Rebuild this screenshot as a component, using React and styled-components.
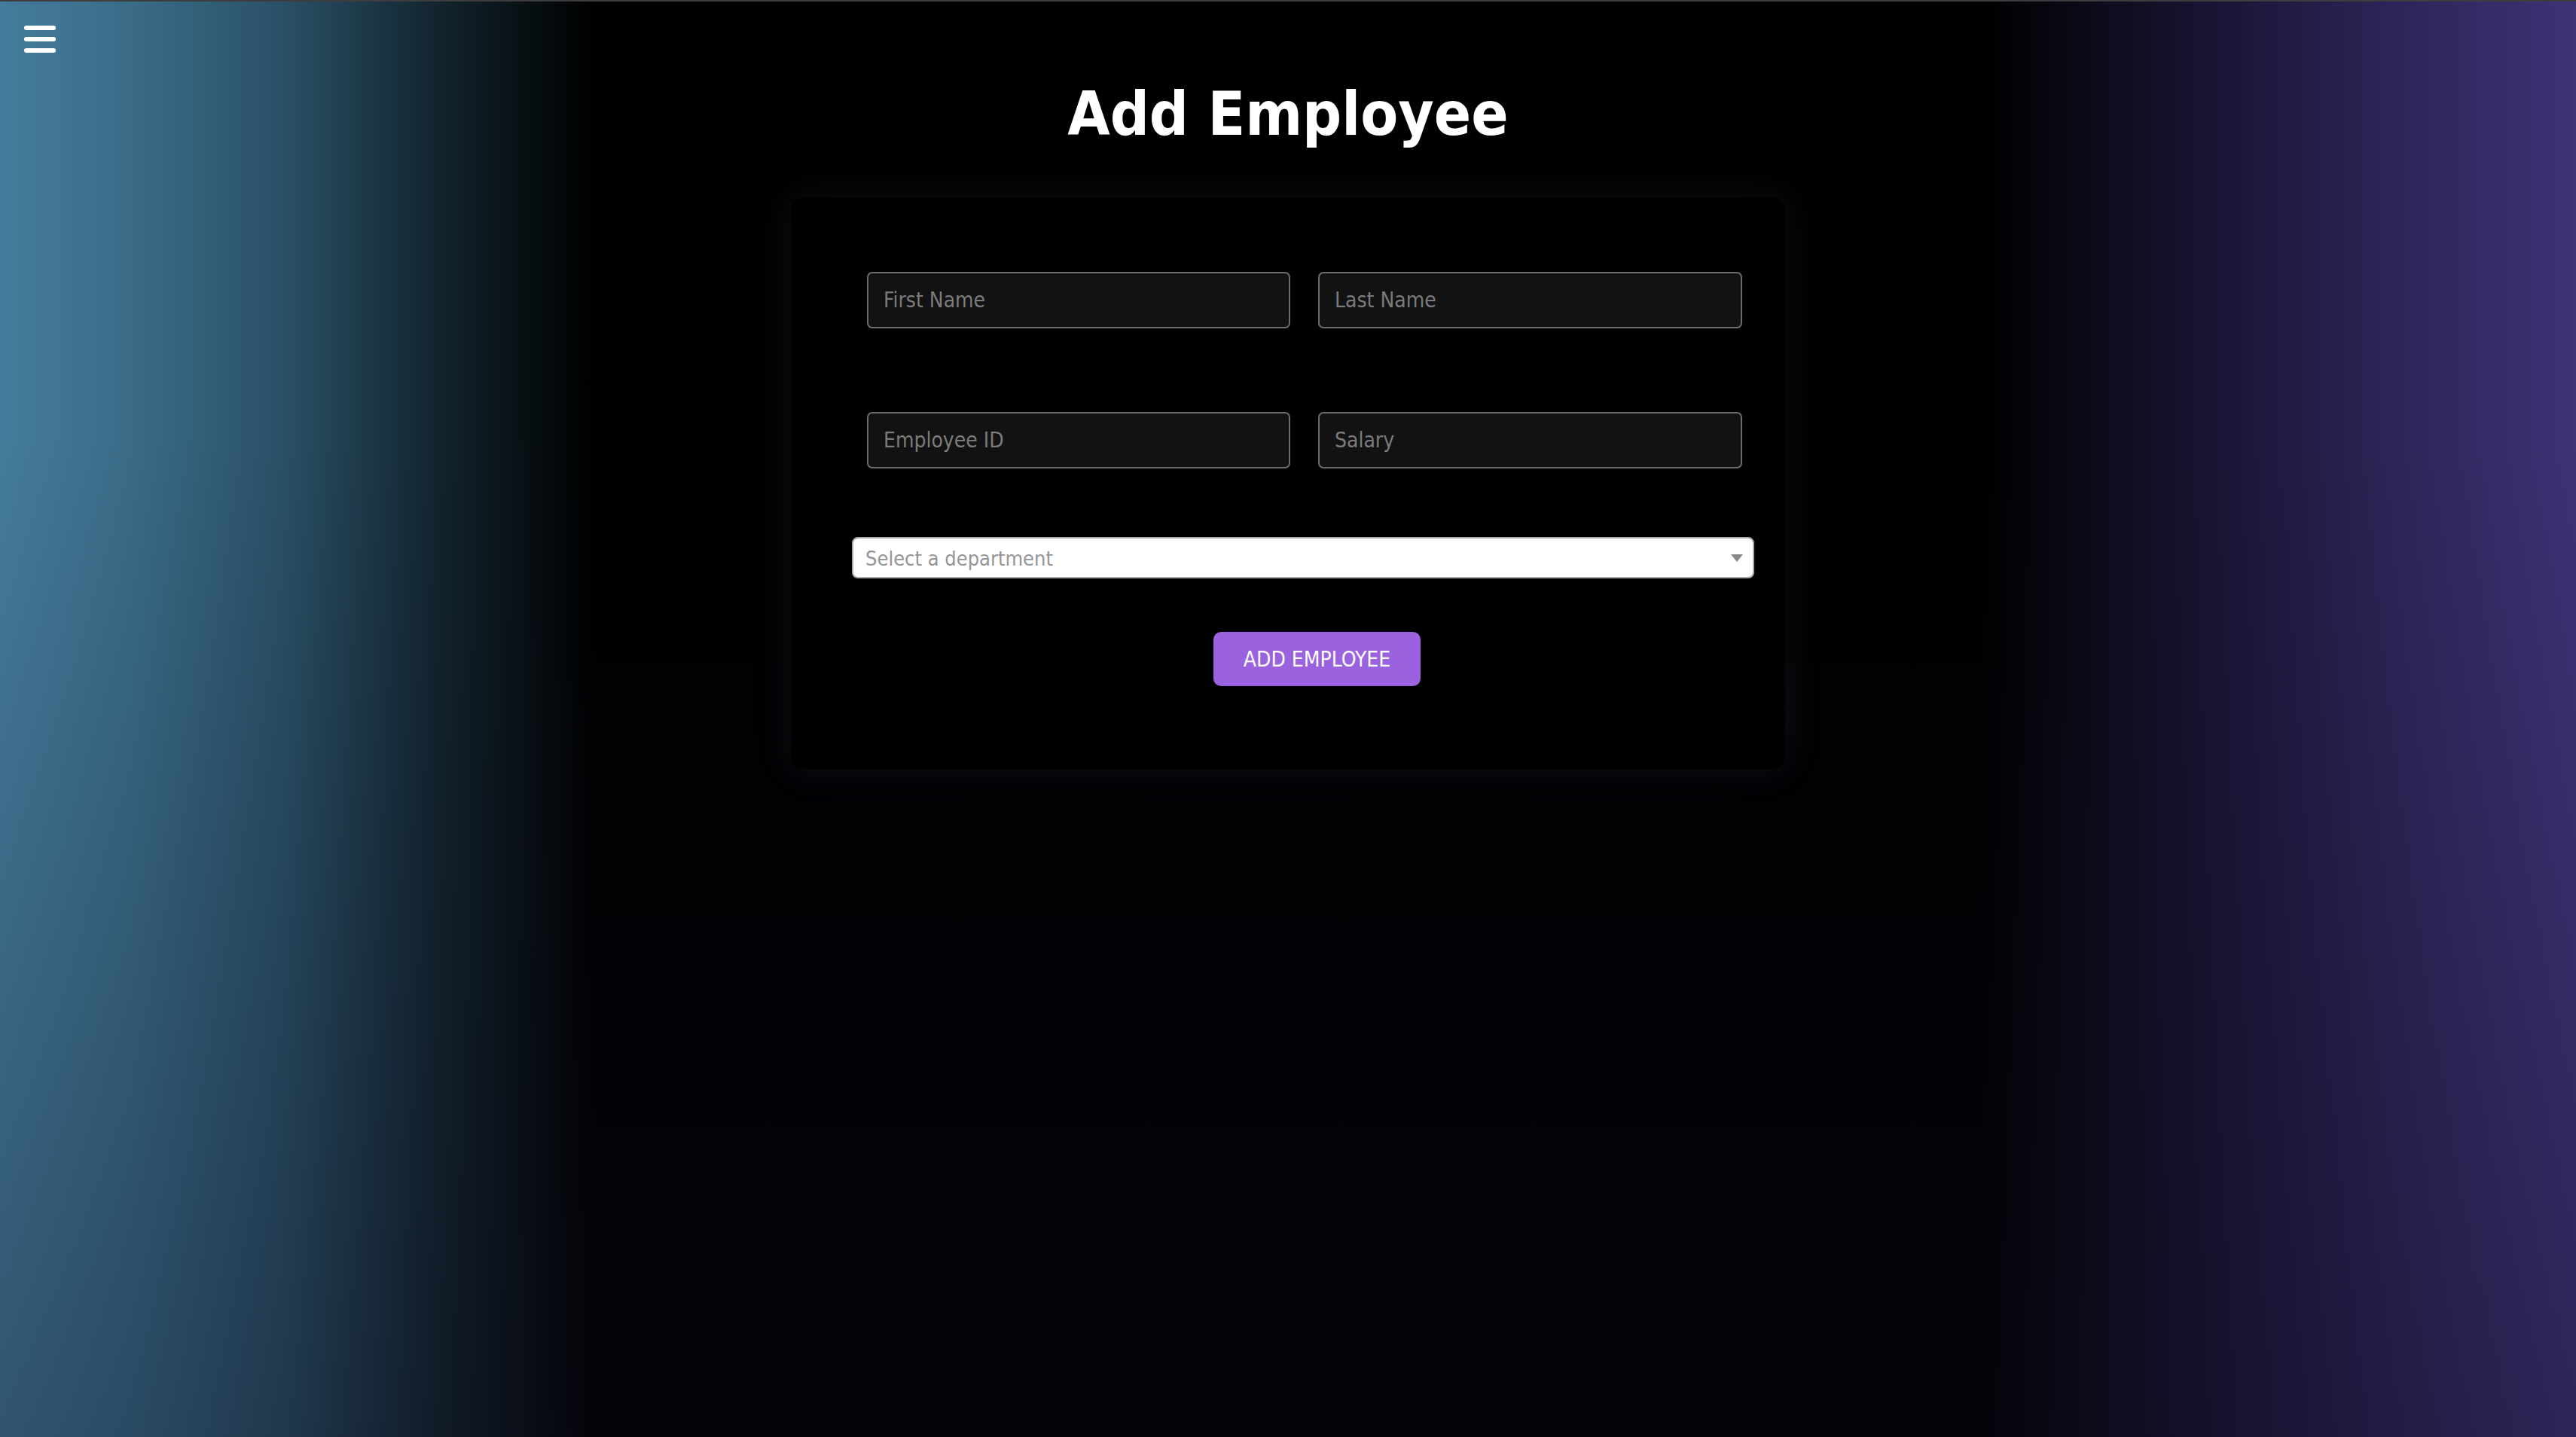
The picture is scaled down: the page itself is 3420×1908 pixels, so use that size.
import React from "react";
import styled, { createGlobalStyle } from "styled-components";

const GlobalStyle = createGlobalStyle`
  html, body {
    margin: 0;
    padding: 0;
    background: #000;
  }
  * { box-sizing: border-box; }
`;

const Page = styled.div`
  position: relative;
  min-height: 100vh;
  border-top: 2px solid #3d3d3f;
  display: flex;
  flex-direction: column;
  align-items: center;
  font-family: "DejaVu Sans Condensed", "DejaVu Sans", sans-serif;
  background:
    linear-gradient(180deg, rgba(0, 0, 0, 0) 30%, rgba(14, 11, 30, 0.35) 100%),
    linear-gradient(
      90deg,
      #447c9b 0%,
      #3a6c88 5%,
      #2a5066 11%,
      #12242e 17%,
      #000000 23%,
      #000000 77%,
      #0c0a18 81%,
      #1c173a 87%,
      #2d2558 93%,
      #3f3276 100%
    );
`;

const MenuButton = styled.button`
  position: absolute;
  top: 32px;
  left: 32px;
  width: 42px;
  padding: 0;
  border: none;
  background: transparent;
  display: flex;
  flex-direction: column;
  gap: 9px;
  cursor: pointer;
`;

const MenuBar = styled.span`
  display: block;
  width: 42px;
  height: 6px;
  border-radius: 3px;
  background: #ffffff;
`;

const Title = styled.h1`
  margin: 108px 0 70px;
  font-size: 81px;
  line-height: 82px;
  font-weight: 700;
  color: #ffffff;
`;

const Card = styled.form`
  width: 1320px;
  height: 759px;
  padding: 99px 41px 110px 81px;
  background: #000000;
  border-radius: 16px;
  box-shadow: 0 0 50px rgba(130, 130, 170, 0.13);
  display: flex;
  flex-direction: column;
`;

const FieldGrid = styled.div`
  display: grid;
  grid-template-columns: 562px 563px;
  column-gap: 37px;
  row-gap: 111px;
  margin: 0 16px 91px 20px;
`;

const TextInput = styled.input`
  height: 75px;
  width: 100%;
  padding: 0 20px;
  background: #121212;
  border: 2px solid #6c6c6c;
  border-radius: 7px;
  color: #e0e0e0;
  font-family: "DejaVu Sans Condensed", "DejaVu Sans", sans-serif;
  font-size: 28px;
  outline: none;

  &::placeholder {
    color: #7b7b7b;
  }
`;

const SelectBox = styled.div`
  height: 55px;
  display: flex;
  align-items: center;
  justify-content: space-between;
  padding: 0 13px 0 16px;
  background: #ffffff;
  border: 2px solid #a9a9a9;
  border-radius: 8px;
  margin-bottom: 71px;
  cursor: pointer;
`;

const SelectPlaceholder = styled.span`
  font-size: 27px;
  color: #959595;
  line-height: 1;
  padding-top: 2px;
`;

const ButtonRow = styled.div`
  display: flex;
  justify-content: center;
  padding-left: 37px;
`;

const SubmitButton = styled.button`
  height: 72px;
  padding: 0 40px;
  background: #9a62de;
  color: #ffffff;
  border: none;
  border-radius: 10px;
  font-family: "DejaVu Sans Condensed", "DejaVu Sans", sans-serif;
  font-size: 28px;
  cursor: pointer;
`;

export default function App() {
  return (
    <>
      <GlobalStyle />
      <Page>
        <MenuButton type="button" aria-label="Menu">
          <MenuBar />
          <MenuBar />
          <MenuBar />
        </MenuButton>
        <Title>Add Employee</Title>
        <Card onSubmit={(e) => e.preventDefault()}>
          <FieldGrid>
            <TextInput placeholder="First Name" />
            <TextInput placeholder="Last Name" />
            <TextInput placeholder="Employee ID" />
            <TextInput placeholder="Salary" />
          </FieldGrid>
          <SelectBox>
            <SelectPlaceholder>Select a department</SelectPlaceholder>
            <svg width="16" height="10" viewBox="0 0 16 10" aria-hidden="true">
              <path d="M0 0 L16 0 L8 10 Z" fill="#8a8a8a" />
            </svg>
          </SelectBox>
          <ButtonRow>
            <SubmitButton type="submit">ADD EMPLOYEE</SubmitButton>
          </ButtonRow>
        </Card>
      </Page>
    </>
  );
}
